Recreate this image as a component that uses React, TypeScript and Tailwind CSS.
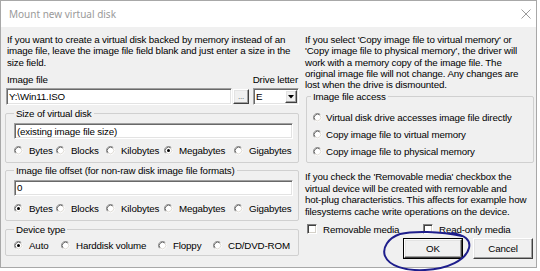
import React from "react";

function Radio({ checked = false }: { checked?: boolean }) {
  return (
    <svg width="9" height="9" viewBox="0 0 12 12" className="block shrink-0">
      <circle cx="6" cy="6" r="5" fill="#fff" />
      <path d="M9.89 2.11 A5.5 5.5 0 0 0 2.11 9.89" fill="none" stroke="#808080" strokeWidth="1" />
      <path d="M9.18 2.82 A4.5 4.5 0 0 0 2.82 9.18" fill="none" stroke="#404040" strokeWidth="1" />
      <path d="M2.11 9.89 A5.5 5.5 0 0 0 9.89 2.11" fill="none" stroke="#ffffff" strokeWidth="1" />
      <path d="M2.82 9.18 A4.5 4.5 0 0 0 9.18 2.82" fill="none" stroke="#d4d0c8" strokeWidth="1" />
      {checked && <circle cx="6" cy="6" r="2" fill="#000" />}
    </svg>
  );
}

function RadioItem({ label, checked = false, gap = "gap-[6px]" }: { label: string; checked?: boolean; gap?: string }) {
  return (
    <div className={`flex items-center ${gap} whitespace-nowrap`}>
      <Radio checked={checked} />
      <span>{label}</span>
    </div>
  );
}

function Check({ label }: { label: string }) {
  return (
    <div className="flex items-center gap-[6px] whitespace-nowrap">
      <div className="w-[10px] h-[10px] bg-white border border-t-[#808080] border-l-[#808080] border-r-white border-b-white shadow-[inset_1px_1px_0_#404040,inset_-1px_-1px_0_#d4d0c8]" />
      <span>{label}</span>
    </div>
  );
}

const sunken =
  "bg-white border border-t-[#a0a0a0] border-l-[#a0a0a0] border-r-white border-b-white shadow-[inset_1px_1px_0_#696969,inset_-1px_-1px_0_#e3e3e3]";
const raised =
  "bg-[#f0f0f0] border border-t-white border-l-white border-r-[#404040] border-b-[#404040] shadow-[inset_-1px_-1px_0_#a0a0a0,inset_1px_1px_0_#e3e3e3]";

function Group({ title, children, className = "" }: { title: string; children: React.ReactNode; className?: string }) {
  return (
    <fieldset className={`border border-[#d0d0d0] rounded-[2px] ${className}`}>
      <legend className="px-[2px] leading-[11.25px]">{title}</legend>
      {children}
    </fieldset>
  );
}

export default function App() {
  return (
    <div className="relative w-[540px] h-[271px] bg-white overflow-hidden font-['Liberation_Sans',Arial,sans-serif] text-[9.75px] tracking-[-0.15px] text-black">
      <div className="w-[537px] h-[268px] border border-[#a8a8a8] flex flex-col">
        {/* title bar */}
        <div className="h-[26px] bg-white flex items-center justify-between pl-[8px] pr-[5px]">
          <span className="font-['Noto_Sans',sans-serif] text-[10px] tracking-normal text-[#9a9a9a]">Mount new virtual disk</span>
          <svg width="10" height="10" viewBox="0 0 10 10" className="block">
            <path d="M0.5 0.5 L9.5 9.5 M9.5 0.5 L0.5 9.5" stroke="#9a9a9a" strokeWidth="1" />
          </svg>
        </div>
        {/* body */}
        <div className="flex-1 bg-[#f0f0f0] flex gap-[6px] pl-[4px] pr-[1px] pt-[7px] leading-[11.25px]">
          {/* left column */}
          <div className="w-[294px] flex flex-col">
            <div className="pl-[2px]">
              <div>If you want to create a virtual disk backed by memory instead of an</div>
              <div>image file, leave the image file field blank and just enter a size in the</div>
              <div>size field.</div>
            </div>
            <div className="mt-[6px] flex justify-between pl-[2px] pr-[1px]">
              <span>Image file</span>
              <span>Drive letter</span>
            </div>
            <div className="mt-[3px] flex items-center h-[17px] pl-[1px]">
              <div className={`${sunken} flex-1 h-[17px] flex items-center pl-[2px]`}>Y:\Win11.ISO</div>
              <div className={`${raised} w-[16px] h-[15px] ml-[1px] flex items-center justify-center text-[8px] text-[#555] leading-none`}>...</div>
              <div className={`${sunken} ml-[4px] w-[46px] h-[17px] flex items-center pl-[2px] pr-[1px]`}>
                <span className="flex-1">E</span>
                <div className={`${raised} w-[12px] h-[13px] flex items-center justify-center`}>
                  <svg width="6" height="4" viewBox="0 0 6 4" className="block"><path d="M0 0 H6 L3 3.5 Z" fill="#000" /></svg>
                </div>
              </div>
            </div>
            <Group title="Size of virtual disk" className="mt-[3px] pl-[8px] pr-[5px] pb-[6px]">
              <div className={`${sunken} mt-[4px] h-[16px] flex items-center pl-[2px]`}>(existing image file size)</div>
              <div className="mt-[6px] grid grid-cols-[42px_50px_58px_70px_auto] h-[11px] items-center">
                <RadioItem label="Bytes" />
                <RadioItem label="Blocks" />
                <RadioItem label="Kilobytes" />
                <RadioItem label="Megabytes" checked />
                <RadioItem label="Gigabytes" />
              </div>
            </Group>
            <Group title="Image file offset (for non-raw disk image file formats)" className="mt-[2px] pl-[8px] pr-[5px] pb-[6px]">
              <div className={`${sunken} mt-[3px] h-[16px] flex items-center pl-[2px]`}>0</div>
              <div className="mt-[7px] grid grid-cols-[42px_50px_58px_70px_auto] h-[11px] items-center">
                <RadioItem label="Bytes" checked />
                <RadioItem label="Blocks" />
                <RadioItem label="Kilobytes" />
                <RadioItem label="Megabytes" />
                <RadioItem label="Gigabytes" />
              </div>
            </Group>
            <Group title="Device type" className="mt-[3px] pl-[8px] pr-[5px] pb-[4px]">
              <div className="mt-[5px] grid grid-cols-[47px_97px_55px_auto] h-[11px] items-center">
                <RadioItem label="Auto" checked />
                <RadioItem label="Harddisk volume" />
                <RadioItem label="Floppy" />
                <RadioItem label="CD/DVD-ROM" />
              </div>
            </Group>
          </div>
          {/* right column */}
          <div className="flex-1 flex flex-col">
            <div>
              <div>If you select 'Copy image file to virtual memory' or</div>
              <div>'Copy image file to physical memory', the driver will</div>
              <div>work with a memory copy of the image file. The</div>
              <div>original image file will not change. Any changes are</div>
              <div>lost when the drive is dismounted.</div>
            </div>
            <Group title="Image file access" className="mt-[1px] ml-[1px] mr-[1px] pl-[6px] pb-[5px] [&>legend]:-ml-[2px]">
              <div className="mt-[9px] flex flex-col gap-[6px]">
                <RadioItem label="Virtual disk drive accesses image file directly" gap="gap-[4px]" />
                <RadioItem label="Copy image file to virtual memory" gap="gap-[4px]" />
                <RadioItem label="Copy image file to physical memory" gap="gap-[4px]" />
              </div>
            </Group>
            <div className="mt-[8px] leading-[11.6px]">
              <div>If you check the 'Removable media' checkbox the</div>
              <div>virtual device will be created with removable and</div>
              <div>hot-plug characteristics. This affects for example how</div>
              <div>filesystems cache write operations on the device.</div>
            </div>
            <div className="mt-[6px] flex pl-[2px]">
              <div className="w-[116px]"><Check label="Removable media" /></div>
              <Check label="Read-only media" />
            </div>
            <div className="mt-[3px] flex justify-end gap-[10px] pr-[2px]">
              <div className="border border-black">
                <div className={`${raised} w-[58px] h-[19px] flex items-center justify-center`}>OK</div>
              </div>
              <div className={`${raised} w-[60px] h-[21px] flex items-center justify-center`}>Cancel</div>
            </div>
          </div>
        </div>
      </div>
      {/* hand drawn annotation */}
      <svg className="absolute left-0 top-0 pointer-events-none" width="540" height="271" viewBox="0 0 540 271">
        <path
          d="M462 236 C440 231, 412 231, 400 234 C388 238, 382 248, 385 256 C389 266, 405 271, 425 270 C448 269, 466 260, 469 248 C471 240, 465 235, 452 233"
          fill="none"
          stroke="#1e1e8c"
          strokeWidth="2"
          strokeLinecap="round"
        />
      </svg>
    </div>
  );
}
